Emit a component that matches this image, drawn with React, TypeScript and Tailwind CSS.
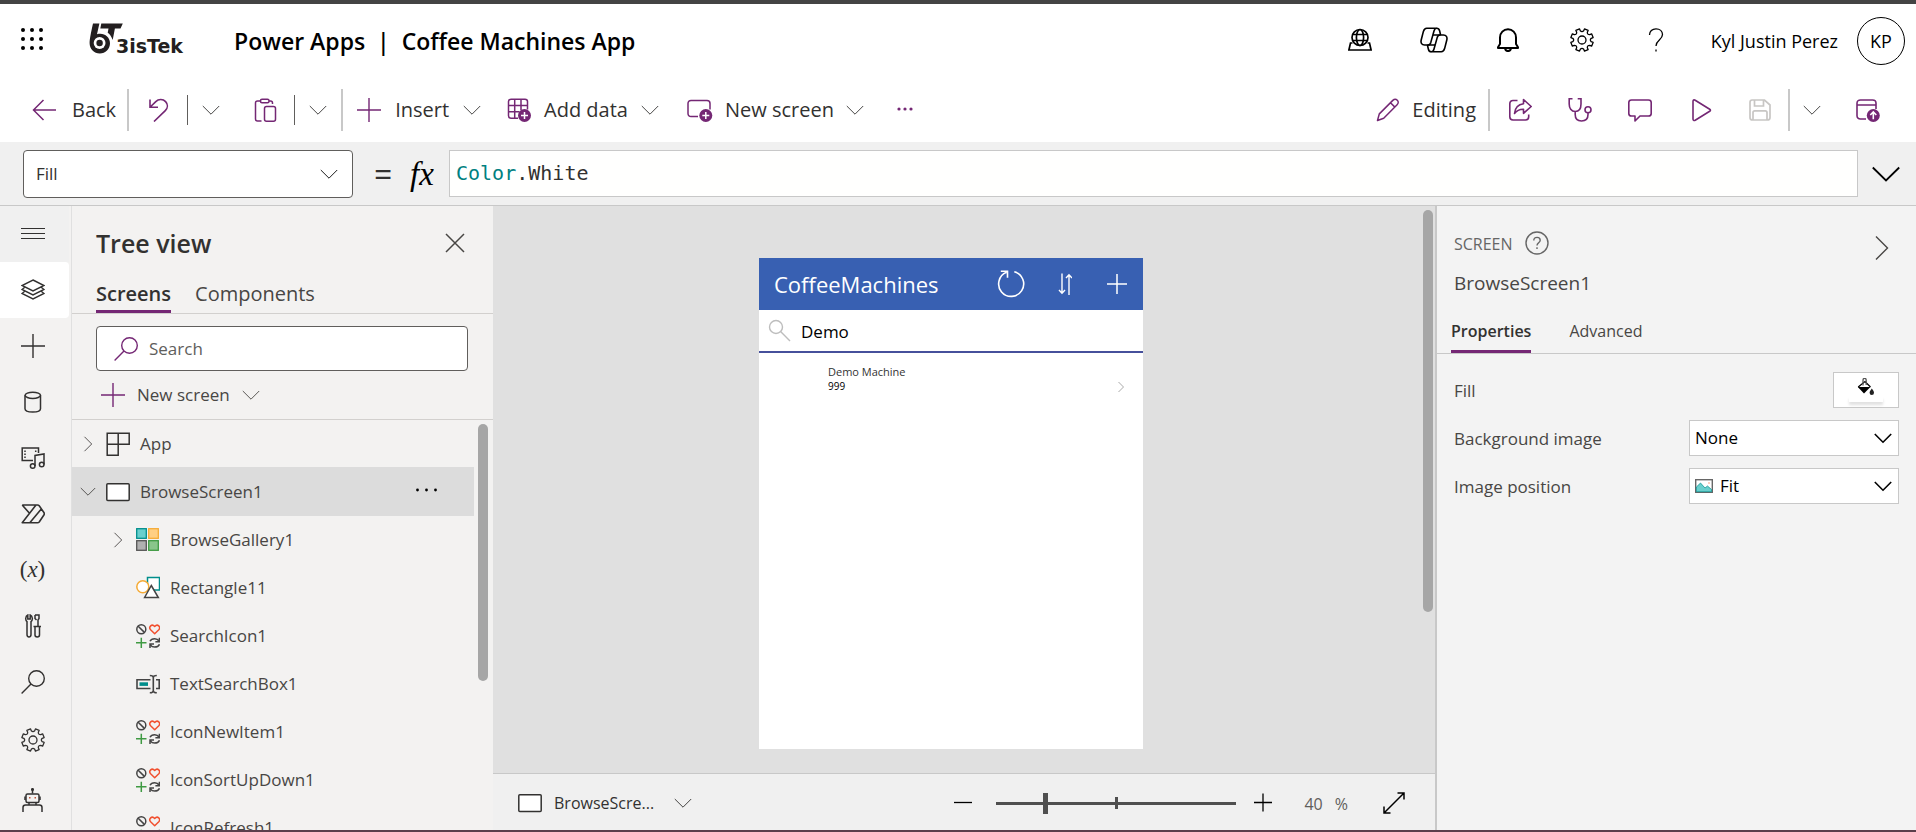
import React, { useState } from "react";

type IconProps = { className?: string };

function Svg({
  w = 24,
  h = 24,
  sw = 1.3,
  className,
  children,
}: {
  w?: number;
  h?: number;
  sw?: number;
  className?: string;
  children: React.ReactNode;
}) {
  return (
    <svg
      width={w}
      height={h}
      viewBox={`0 0 ${w} ${h}`}
      fill="none"
      stroke="currentColor"
      strokeWidth={sw}
      className={`shrink-0 ${className ?? ""}`}
      aria-hidden="true"
    >
      {children}
    </svg>
  );
}

const Chevron = ({ className }: IconProps) => (
  <Svg w={18} h={18} sw={0.9} className={className}>
    <path d="M.8 5 9 13.2 17.2 5" />
  </Svg>
);
const ChevronRight = ({ className }: IconProps) => (
  <Svg w={10} h={16} sw={0.9} className={className}>
    <path d="M1.500.8 8.700 8l-7.200 7.200" />
  </Svg>
);
const SelectChevron = ({ className }: IconProps) => (
  <Svg w={18} h={18} sw={1.6} className={className}>
    <path d="M.8 5 9 13.2 17.2 5" />
  </Svg>
);
const Plus = ({ className }: IconProps) => (
  <Svg sw={1.4} className={className}>
    <path d="M12 0v24M0 12h24" />
  </Svg>
);
const Magnifier = ({ className }: IconProps) => (
  <Svg className={className} sw={1.4}>
    <circle cx="15.500" cy="8.500" r="7.800" />
    <path d="M10 14 .6 23.400" />
  </Svg>
);

function gearPath() {
  const at = (r: number, deg: number) => {
    const a = ((deg - 90) * Math.PI) / 180;
    return `${(12 + r * Math.cos(a)).toFixed(2)} ${(12 + r * Math.sin(a)).toFixed(2)}`;
  };
  let d = "";
  for (let i = 0; i < 8; i++) {
    const a = i * 45 + 22.5;
    d += `${i ? "L" : "M"}${at(11.4, a - 10)}L${at(11.4, a + 10)}L${at(9.4, a + 12)}Q${at(7.4, a + 22.5)} ${at(9.4, a + 33)}`;
  }
  return d + "Z";
}
const gear = gearPath();

const Gear = () => (
  <Svg sw={1.3}>
    <path d={gear} strokeLinejoin="round" />
    <circle cx="12" cy="12" r="4" />
  </Svg>
);

const Logo = () => (
  <div className="flex items-end" aria-label="BisTek">
    <svg width="35" height="32" viewBox="0 0 35 32" aria-hidden="true" className="-mr-2 shrink-0">
      <path
        d="M4 .5h6.400L8 11.200C14.500 9.200 21 13.500 21 20.300c0 5.700-4.500 10.200-10.200 10.200S.6 26 .6 20.300c0-4 1.300-10.500 3.400-19.800Z"
        fill="#231f20"
      />
      <circle cx="10.600" cy="20" r="5.900" fill="#fff" />
      <circle cx="10.600" cy="20" r="3.200" fill="#231f20" />
      <path
        d="M12.300.5h21.500l-2.300 5h-5.600l-2.200 11.500c-1.200-3.400-2.700-5.700-5-7.300l.8-4.200h-8.200Z"
        fill="#231f20"
      />
    </svg>
    <span className="font-['DejaVu_Sans'] text-[19px] leading-[18px] font-bold text-[#231f20]">3isTek</span>
  </div>
);

const Waffle = () => (
  <svg width="24" height="24" viewBox="0 0 24 24" fill="#000" aria-hidden="true">
    {[3, 12, 21].map((y) => [3, 12, 21].map((x) => <circle key={`${x}-${y}`} cx={x} cy={y} r="2" />))}
  </svg>
);

const EnvIcon = () => (
  <Svg sw={1.7}>
    <circle cx="12" cy="9.500" r="8" />
    <ellipse cx="12" cy="9.500" rx="3.600" ry="8" />
    <path d="M4.800 6.500h14.400M4.800 12.500h14.400M4.500 15H2.500L.9 22h22.200l-1.600-7h-2" />
  </Svg>
);
const Copilot = () => (
  <Svg w={28} h={26} sw={1.6}>
    <g strokeLinejoin="round">
      <path d="M9.500 1.200H6.700C4.800 1.200 4 2.400 3.400 4.400L1.200 13c-.7 3 .6 5 3.300 5H8c1.500 0 2.300-1 2.800-2.600L14 4c.5-1.800 1.200-2.800 2.600-2.800Z" />
      <path d="M18.500 24.800h2.800c1.900 0 2.700-1.200 3.300-3.200l2.200-8.600c.7-3-.6-5-3.300-5H20c-1.500 0-2.300 1-2.800 2.600L14 22c-.5 1.800-1.200 2.800-2.600 2.800Z" />
      <path d="M16.600 1.200c1.900 0 2.600.9 3 2.600l1 4.200M11.400 24.800c-1.900 0-2.600-.9-3-2.600L7.400 18" />
      <path d="M13 8h7.500M7.500 18h7.600" />
    </g>
  </Svg>
);
const Bell = () => (
  <Svg sw={2}>
    <path d="M4 16V9.500C4 4.800 7.500 1.300 12 1.300s8 3.500 8 8.200V16l2 3.200v.8H2v-.8Z" strokeLinejoin="round" />
    <path d="M9 20.500c.3 1.600 1.400 2.600 3 2.600s2.700-1 3-2.600" />
  </Svg>
);
const Question = () => (
  <Svg sw={1.3}>
    <path d="M5.500 7C5.500 3.300 8.200.8 12 .8s6.500 2.300 6.500 5.800c0 5.400-6.500 5.600-6.500 11.400M12 21.500v2" />
  </Svg>
);

const BackArrow = () => (
  <Svg sw={1.5}>
    <path d="M1.500 12H24M11.500 2 1.500 12l10 10" />
  </Svg>
);
const Undo = () => (
  <Svg sw={1.6}>
    <path d="M4 1.500V9.300h8M4.500 8.800l5.300-5.200C12.400 1 17 .8 19.600 3.600c2.500 2.700 2.200 6.500-.3 9L8 23.500" />
  </Svg>
);
const Clipboard = () => (
  <Svg sw={1.5}>
    <path d="M7.500 3H4.500C3.200 3 2.500 3.700 2.500 5v16c0 1.300.7 2 2 2h4M16 3h1.500c1.300 0 2 .7 2 2v1" />
    <rect x="7.500" y="1.200" width="8.500" height="3.600" rx="1.500" />
    <rect x="11.500" y="8.500" width="11" height="14.700" rx="2" />
  </Svg>
);
const AddData = () => (
  <Svg sw={1.5}>
    <path d="M11 20.300H4c-1.600 0-2.500-1-2.500-2.500V3.500C1.500 2 2.400 1.200 4 1.200h14c1.500 0 2.500.8 2.500 2.300v8M1.500 7.500h19M1.500 13.700h11M7.700 1.200v19M14 1.200v11" />
    <circle cx="17.500" cy="17.500" r="6.500" fill="currentColor" stroke="none" />
    <path d="M17.500 14v7M14 17.500h7" stroke="#fff" />
  </Svg>
);
const AddScreen = () => (
  <Svg w={26} sw={1.5}>
    <path d="M11 18.500H4C2.200 18.500 1 17.300 1 15.500v-10C1 3.700 2.200 2.500 4 2.500h16c1.800 0 3 1.200 3 3v6" />
    <circle cx="18.800" cy="17.500" r="6.500" fill="currentColor" stroke="none" />
    <path d="M18.800 14v7M15.300 17.500h7" stroke="#fff" />
  </Svg>
);
const Pencil = () => (
  <Svg sw={1.5}>
    <path
      d="m1.500 22.500 1.800-6.600L16.800 2.400c1.500-1.500 3.300-1.400 4.500-.2s1.300 3-.2 4.500L7.700 20.300ZM14.500 4.700l4.400 4.400"
      strokeLinejoin="round"
    />
  </Svg>
);
const Share = () => (
  <Svg sw={1.6}>
    <path d="M9.500 2.500H5c-2 0-3.200 1.200-3.200 3.200v13.100C1.800 20.800 3 22 5 22h12.500c2 0 3.200-1.200 3.200-3.200V16.500" />
    <path
      d="M15.500 1.500 23.200 8.500l-7.700 6.800v-4.100c-4-.1-6.700 1.200-9 4.300.5-5.200 3.500-9.200 9-9.800Z"
      strokeLinejoin="round"
    />
  </Svg>
);
const Checker = () => (
  <Svg sw={1.6}>
    <path d="M4.500.8H1.200V6c0 4 2 7.500 6 7.500S13 10 13 6V.8H9.700M7.200 13.500v3c0 4 2.300 6.500 6.300 6.500s6.500-2.500 6.500-6.500V15" />
    <circle cx="20" cy="11.700" r="3" />
  </Svg>
);
const Comment = () => (
  <Svg sw={1.6}>
    <path
      d="M3.500 2h17c1.600 0 2.700 1 2.700 2.600v10.800c0 1.600-1.100 2.600-2.700 2.600H12l-5 5V18H3.500C1.900 18 .8 17 .8 15.400V4.600C.8 3 1.900 2 3.500 2Z"
      strokeLinejoin="round"
    />
  </Svg>
);
const Play = () => (
  <Svg sw={1.6}>
    <path
      d="M5 3.500c0-1.500 1-2 2.200-1.300l14.500 9c1 .6 1 1.400 0 2l-14.500 9C6 22.900 5 22.400 5 21Z"
      strokeLinejoin="round"
    />
  </Svg>
);
const Save = () => (
  <Svg sw={1.7}>
    <path d="M4 2h12.500L22 7v12.500c0 1.600-.8 2.500-2.500 2.500h-15C2.800 22 2 21.100 2 19.500v-15C2 2.900 2.800 2 4 2ZM6.500 2v6h9V2M5 22v-7.500c0-1 .6-1.700 1.700-1.700h10.600c1.100 0 1.700.7 1.700 1.700V22" />
  </Svg>
);
const Publish = () => (
  <Svg sw={1.6}>
    <path d="M10 21H4.500C2.500 21 1 19.800 1 17.800V5.200C1 3.200 2.500 2 4.500 2h12c2 0 3.500 1.200 3.500 3.200V11M1 7h19" />
    <circle cx="17.300" cy="17.500" r="6.500" fill="currentColor" stroke="none" />
    <path d="M17.300 21.300v-7M14.300 17l3-3 3 3" stroke="#fff" />
  </Svg>
);

const Hamburger = () => (
  <Svg sw={1}>
    <path d="M0 6.500h24M0 11.500h24M0 16.500h24" />
  </Svg>
);
const Layers = () => (
  <Svg sw={1.4}>
    <path d="m12 2 11 5.500L12 13 1 7.500ZM3.500 9.500 1 11.500 12 17l11-5.500-2.500-2M3.500 13.500 1 15.500 12 21l11-5.500-2.500-2" />
  </Svg>
);
const Database = () => (
  <Svg sw={1.5}>
    <path d="M4 5.300v13.400c0 1.900 3.400 3.300 7.800 3.300s7.700-1.400 7.700-3.300V5.300" />
    <ellipse cx="11.800" cy="5.300" rx="7.700" ry="3.100" />
  </Svg>
);
const Media = () => (
  <Svg sw={1.5}>
    <path d="M12 14.500H1.200V2H17.500v5M14 20V9.500L23 8v10.500" />
    <circle cx="11.700" cy="20" r="2.300" />
    <circle cx="20.700" cy="18.500" r="2.300" />
    <path d="M4 4.500v8M14.700 4.500v3" strokeDasharray="1.500 1.500" />
  </Svg>
);
const Flow = () => (
  <Svg sw={1.6}>
    <path
      d="M1.200 3H16.500c.8 0 1.200.2 1.700.8l4.700 6.700c.6.900.6 1.600 0 2.500L18.200 20c-.5.600-.9.800-1.700.8H1.200L15 3M1.200 3l7.300 8.300M8.800 20.800 20.300 6.900"
      strokeLinejoin="round"
    />
  </Svg>
);
const Tools = () => (
  <Svg sw={1.5}>
    <path d="M6.800 1C4.200 2 4.200 6.500 6 7.600V20.500c0 3.200 4 3.200 4 0V7.600c2-1.200 1.800-5.600-.8-6.600v4H6.800ZM14 1h4v3.500L17 6v6.500h2M14 1v3.500L15.500 6M12.500 12.500H20M14 13v8c0 2.500 4.500 2.500 4.500 0v-8" />
  </Svg>
);
const Bot = () => (
  <Svg sw={1.5}>
    <path d="M2 24v-4.500C2 18 3 17 4.500 17h14c1.500 0 2.500 1 2.500 2.500V24M11.500 1v4.500M8 14.500v2M15 14.500v2M4 8.500v3.500M19 8.500v3.500" />
    <rect x="5" y="6" width="13" height="8.500" rx="1.500" />
    <circle cx="11.500" cy="1.500" r=".8" />
    <path d="M8 9.800h1.500M13.500 9.800H15" stroke="#c0563b" />
  </Svg>
);

const AppIcon = () => (
  <Svg sw={1.5}>
    <path d="M1.200 1.200h22v11h-22ZM1.200 12.200v11h11v-22" />
  </Svg>
);
const ScreenIcon = () => (
  <Svg sw={1.5} className="text-[#323130]">
    <rect x=".8" y="3.800" width="22.400" height="16.800" rx="1" fill="#fff" />
  </Svg>
);
const GalleryIcon = () => (
  <Svg sw={1.3}>
    <rect x=".7" y=".7" width="9.600" height="9.600" fill="#69cfcd" stroke="#008e8c" />
    <rect x="12.700" y=".7" width="9.600" height="9.600" fill="#ffcf84" stroke="#f5ab36" />
    <rect x=".7" y="12.700" width="9.600" height="9.600" fill="#b0b0b0" stroke="#555" />
    <rect x="12.700" y="12.700" width="9.600" height="9.600" fill="#8ac58b" stroke="#3f9a43" />
  </Svg>
);
const ShapesIcon = () => (
  <Svg sw={1.5}>
    <rect x="11.500" y="1.500" width="12" height="12.500" fill="#fff" stroke="#008e8c" />
    <circle cx="6.800" cy="10.800" r="6" fill="#fff" stroke="#f5ab36" />
    <path d="m15.300 9.500 7 12H8.600Z" fill="#fff" stroke="#444" />
  </Svg>
);
const IconSet = () => (
  <Svg sw={1.5}>
    <circle cx="5.300" cy="5.300" r="4.500" stroke="#444" />
    <path d="m2.200 2.200 6.200 6.200" stroke="#444" />
    <path
      d="M18.700 9.800 14.600 5.700c-2.400-2.700 1.200-6.400 4.100-3.200 2.900-3.200 6.500.5 4.100 3.200Z"
      stroke="#f1502f"
      strokeLinejoin="round"
    />
    <path d="M5.300 13.700v10.300M0 18.800h10.500" stroke="#3f9a43" />
    <path
      d="M14 17.300c.8-1.800 2.500-2.600 4.700-2.600 2 0 3.500 1 4.300 2.300M23.400 13.800v3.900h-4M23.500 20.300c-.8 1.800-2.500 2.800-4.800 2.800-2 0-3.500-1-4.300-2.300M14 24v-3.900h4"
      stroke="#444"
    />
  </Svg>
);
const TextBoxIcon = () => (
  <Svg sw={1.6}>
    <path d="M14.500 7.800H1v8.700h13.500M20 7.800h3.200v8.700H20" stroke="#444" />
    <path d="M3.500 12.100h8.500" stroke="#008e8c" strokeWidth="3.600" />
    <path
      d="M13.800 3.500c2 0 3.500.5 3.500 2v13.200c0 1.500-1.500 2-3.500 2M20.800 3.500c-2 0-3.500.5-3.500 2M20.800 20.700c-2 0-3.500-.5-3.500-2"
      stroke="#444"
    />
  </Svg>
);

const railItems: { label: string; icon: React.ReactNode; box: string }[] = [
  { label: "Menu", icon: <Hamburger />, box: "h-14 bg-[#f0f0f0]" },
  { label: "Tree view", icon: <Layers />, box: "h-14 bg-white rounded-r-sm" },
  { label: "Insert", icon: <Plus />, box: "h-14" },
  { label: "Data", icon: <Database />, box: "h-14" },
  { label: "Media", icon: <Media />, box: "h-14" },
  { label: "Power Automate", icon: <Flow />, box: "h-14" },
  {
    label: "Variables",
    icon: (
      <span className="font-['Liberation_Serif'] text-[23px] leading-6 text-[#323130]">
        (<i>x</i>)
      </span>
    ),
    box: "h-14",
  },
  { label: "Advanced tools", icon: <Tools />, box: "h-14" },
  { label: "Search", icon: <Magnifier />, box: "h-14" },
  { label: "Settings", icon: <Gear />, box: "h-[60px]" },
  { label: "Virtual agent", icon: <Bot />, box: "h-[60px]" },
];

const childRows: { name: string; icon: React.ReactNode; expandable?: boolean }[] = [
  { name: "BrowseGallery1", icon: <GalleryIcon />, expandable: true },
  { name: "Rectangle11", icon: <ShapesIcon /> },
  { name: "SearchIcon1", icon: <IconSet /> },
  { name: "TextSearchBox1", icon: <TextBoxIcon /> },
  { name: "IconNewItem1", icon: <IconSet /> },
  { name: "IconSortUpDown1", icon: <IconSet /> },
  { name: "IconRefresh1", icon: <IconSet /> },
];

const Divider = () => <span className="h-[42px] w-0.5 shrink-0 bg-[#c8c8c8]" />;
const ThinDivider = () => <span className="h-[30px] w-px shrink-0 bg-[#605e5c]" />;

function Header() {
  const actions = [
    { label: "Environment", icon: <EnvIcon /> },
    { label: "Copilot", icon: <Copilot /> },
    { label: "Notifications", icon: <Bell /> },
    { label: "Settings", icon: <Gear /> },
    { label: "Help", icon: <Question /> },
  ];
  return (
    <header className="flex h-[74px] shrink-0 items-center bg-white pr-[11px] pl-5 text-black">
      <button aria-label="App launcher" className="pb-1">
        <Waffle />
      </button>
      <div className="ml-[45px] pb-1">
        <Logo />
      </div>
      <h1 className="ml-[51px] text-[23px] font-semibold whitespace-pre">Power Apps  |  Coffee Machines App</h1>
      <div className="ml-auto flex items-center">
        {actions.map((a) => (
          <button key={a.label} aria-label={a.label} className="flex w-[74px] justify-center pb-0.5">
            {a.icon}
          </button>
        ))}
        <span className="ml-[18px] text-[18px] whitespace-nowrap">Kyl Justin Perez</span>
        <button className="ml-[19px] size-12 rounded-full border border-black text-[18px]">KP</button>
      </div>
    </header>
  );
}

function Toolbar() {
  return (
    <div className="flex h-16 shrink-0 items-center bg-white pr-9 pl-8 text-[20px] whitespace-nowrap text-[#323130]">
      <button className="mr-[11px] flex items-center gap-4">
        <span className="text-[#742774]">
          <BackArrow />
        </span>
        Back
      </button>
      <Divider />
      <button aria-label="Undo" className="mx-[17px] text-[#742774]">
        <Undo />
      </button>
      <ThinDivider />
      <button aria-label="Undo options" className="mr-[33px] ml-[14px]">
        <Chevron />
      </button>
      <button aria-label="Paste" className="mr-[17px] text-[#742774]">
        <Clipboard />
      </button>
      <ThinDivider />
      <button aria-label="Paste options" className="mx-[14px]">
        <Chevron />
      </button>
      <Divider />
      <button className="ml-[14px] flex items-center gap-[14px]">
        <span className="text-[#742774]">
          <Plus />
        </span>
        Insert
        <Chevron />
      </button>
      <button className="ml-[26px] flex items-center gap-[13px]">
        <span className="text-[#742774]">
          <AddData />
        </span>
        Add data
        <Chevron />
      </button>
      <button className="ml-7 flex items-center gap-3">
        <span className="text-[#742774]">
          <AddScreen />
        </span>
        New screen
        <Chevron />
      </button>
      <button aria-label="More commands" className="ml-8 text-[#742774]">
        <svg width="18" height="18" viewBox="0 0 18 18" fill="currentColor" aria-hidden="true">
          <circle cx="3" cy="8" r="1.600" />
          <circle cx="9" cy="8" r="1.600" />
          <circle cx="15" cy="8" r="1.600" />
        </svg>
      </button>

      <button className="ml-auto flex items-center gap-3">
        <span className="text-[#742774]">
          <Pencil />
        </span>
        Editing
      </button>
      <span className="mr-[18px] ml-3 flex">
        <Divider />
      </span>
      <div className="flex gap-9 text-[#742774]">
        <button aria-label="Share">
          <Share />
        </button>
        <button aria-label="App checker">
          <Checker />
        </button>
        <button aria-label="Comments">
          <Comment />
        </button>
        <button aria-label="Preview">
          <Play />
        </button>
        <button aria-label="Save" className="mr-4 text-[#c8c6c4]">
          <Save />
        </button>
      </div>
      <Divider />
      <button aria-label="Save options" className="mr-[35px] ml-[13px]">
        <Chevron />
      </button>
      <button aria-label="Publish" className="text-[#742774]">
        <Publish />
      </button>
    </div>
  );
}

function FormulaBar() {
  return (
    <div className="flex h-16 shrink-0 items-center border-b border-[#c8c8c8] bg-[#f0f0f0] pr-4 pl-[23px]">
      <div className="relative w-[330px] shrink-0">
        <select
          aria-label="Property"
          className="h-12 w-full appearance-none rounded-sm border border-[#605e5c] bg-white px-3 text-[17px] text-[#323130]"
        >
          <option>Fill</option>
        </select>
        <Chevron className="pointer-events-none absolute top-[15px] right-[15px]" />
      </div>
      <span className="ml-[21px] w-[18px] text-center text-[32px] leading-8 text-[#323130]">=</span>
      <span className="mr-3 ml-[18px] w-[27px] font-['Liberation_Serif'] text-[33px] leading-10 text-black italic">fx</span>
      <div
        role="textbox"
        aria-label="Formula"
        contentEditable
        suppressContentEditableWarning
        className="h-[47px] min-w-0 flex-1 border border-[#c8c8c8] bg-[#fffffe] px-1.5 pt-2 font-['DejaVu_Sans_Mono'] text-[20px] leading-7 text-[#323130]"
      >
        <span className="text-[#008080]">Color</span>.White
      </div>
      <button aria-label="Expand formula bar" className="ml-[14px] text-black">
        <Svg w={28} h={28} sw={1.8}>
          <path d="m.8 7.500 13.200 13 13.200-13" />
        </Svg>
      </button>
    </div>
  );
}

function Rail() {
  return (
    <nav className="flex w-[72px] shrink-0 flex-col border-r border-[#e0e0e0] text-[#323130]">
      {railItems.map((r) => (
        <button
          key={r.label}
          aria-label={r.label}
          className={`flex w-[69px] shrink-0 items-center justify-center pr-1 ${r.box}`}
        >
          {r.icon}
        </button>
      ))}
    </nav>
  );
}

function TreeView() {
  const [tab, setTab] = useState("Screens");
  return (
    <aside className="flex w-[421px] shrink-0 flex-col text-[17px] text-[#484644]">
      <div className="flex items-center justify-between pt-[18px] pr-[27px] pl-6">
        <h2 className="text-[25px] leading-[38px] font-semibold text-[#323130]">Tree view</h2>
        <button aria-label="Close" className="text-[#484644]">
          <Svg w={22} h={22} sw={1.5}>
            <path d="m2 2 18 18M20 2 2 20" />
          </Svg>
        </button>
      </div>
      <div className="mt-[11px] flex gap-6 border-b border-[#d2d0ce] pl-6 text-[20px]">
        {["Screens", "Components"].map((t) => (
          <button
            key={t}
            onClick={() => setTab(t)}
            className={
              tab === t
                ? "h-10 border-b-3 border-[#742774] pt-1 font-semibold text-[#323130]"
                : "h-10 border-b-3 border-transparent pt-1"
            }
          >
            {t}
          </button>
        ))}
      </div>
      <label className="mt-3 mr-[25px] ml-6 flex h-[45px] items-center gap-[11px] rounded-sm border border-[#605e5c] bg-white px-[17px]">
        <span className="text-[#742774]">
          <Magnifier />
        </span>
        <input
          aria-label="Search"
          placeholder="Search"
          className="min-w-0 flex-1 bg-transparent outline-none placeholder:text-[#605e5c]"
        />
      </label>
      <div className="flex h-[49px] items-center border-b border-[#d2d0ce] pl-[29px]">
        <button className="flex items-center gap-3">
          <span className="text-[#742774]">
            <Plus />
          </span>
          New screen
          <Chevron />
        </button>
      </div>
      <div className="flex min-h-0 flex-1">
        <ul className="min-w-0 flex-1 overflow-hidden">
          <li className="flex h-[47px] items-center pl-[11px]">
            <span className="flex w-[23px]">
              <ChevronRight />
            </span>
            <span className="text-[#323130]">
              <AppIcon />
            </span>
            <span className="ml-[10px]">App</span>
          </li>
          <li className="flex h-[49px] items-center bg-[#dcdcdc] pr-[35px] pl-2">
            <span className="flex w-[26px]">
              <Svg w={16} h={16} sw={0.9}>
                <path d="M.8 4 8 11.200 15.200 4" />
              </Svg>
            </span>
            <ScreenIcon />
            <span className="ml-[10px]">BrowseScreen1</span>
            <button aria-label="More actions" className="ml-auto text-black">
              <svg width="24" height="12" viewBox="0 0 24 12" fill="currentColor" aria-hidden="true">
                <circle cx="2.500" cy="4" r="1.400" />
                <circle cx="11.500" cy="4" r="1.400" />
                <circle cx="20.500" cy="4" r="1.400" />
              </svg>
            </button>
          </li>
          {childRows.map((c) => (
            <li key={c.name} className="flex h-12 items-center pl-[41px]">
              <span className="flex w-[23px]">{c.expandable && <ChevronRight />}</span>
              {c.icon}
              <span className="ml-[10px]">{c.name}</span>
            </li>
          ))}
        </ul>
        <div className="w-[19px] shrink-0 pt-1 pl-1">
          <div className="h-[257px] w-[10px] rounded-full bg-[#a6a6a6]" />
        </div>
      </div>
    </aside>
  );
}

function PhonePreview() {
  return (
    <div className="flex h-[491px] w-[384px] flex-col bg-white font-['Open_Sans']">
      <div className="flex h-[52px] shrink-0 items-center bg-[#3860b2] px-[15px] text-white">
        <span className="flex-1 text-[22px]">CoffeeMachines</span>
        <button aria-label="Refresh">
          <Svg w={28} h={28} sw={1.6}>
            <path d="M17.300 1.800A12.500 12.500 0 1 1 9.500 2.300M3.800 1.200h6.700v6.500" />
          </Svg>
        </button>
        <button aria-label="Sort" className="ml-[33px]">
          <Svg w={14} sw={1.4}>
            <path d="M4 1.500v20M1 18l3 3.200L7 18M11 23V2.500M8 6l3-3.200L14 6" />
          </Svg>
        </button>
        <button aria-label="New item" className="ml-[34px]">
          <Svg w={22} h={22} sw={1.5}>
            <path d="M11 1v20M1 11h20" />
          </Svg>
        </button>
      </div>
      <label className="flex h-[43px] shrink-0 items-center border-b-2 border-[#46509b] pl-[9px]">
        <Svg w={24} h={24} sw={1.4} className="text-[#bdbdbd]">
          <circle cx="8" cy="8" r="6.500" />
          <path d="m12.600 12.600 9.400 9.400" />
        </Svg>
        <input
          aria-label="Search items"
          defaultValue="Demo"
          className="ml-[9px] min-w-0 flex-1 pt-0.5 text-[17px] text-black outline-none"
        />
      </label>
      <div className="flex items-center pt-3 pr-[18px] pl-[69px]">
        <div className="flex-1 text-[11px] leading-[14px]">
          <p className="text-[#333]">Demo Machine</p>
          <p className="text-[10px] text-black">999</p>
        </div>
        <Svg w={8} h={12} sw={1} className="mt-4 text-[#aaa]">
          <path d="m1.500 1 5 5-5 5" />
        </Svg>
      </div>
    </div>
  );
}

function Workspace() {
  return (
    <main className="flex min-w-0 flex-1 flex-col bg-[#e0e0e0]">
      <div className="flex min-h-0 flex-1">
        <div className="flex flex-1 justify-center pt-[52px] pr-[14px]">
          <PhonePreview />
        </div>
        <div className="w-3 shrink-0 pt-1">
          <div className="h-[402px] w-[10px] rounded-full bg-[#a6a6a6]" />
        </div>
      </div>
      <div className="flex h-[57px] shrink-0 items-center border-t border-[#c8c8c8] bg-[#f0f0f0] pt-0.5 pr-[29px] pl-[25px] text-[16px] text-[#323130]">
        <button className="flex items-center">
          <ScreenIcon />
          <span className="ml-3">BrowseScre...</span>
          <Chevron className="ml-5" />
        </button>
        <button aria-label="Zoom out" className="mr-[23px] ml-auto text-black">
          <Svg w={20} h={20} sw={1.3}>
            <path d="M1 9.500h18" />
          </Svg>
        </button>
        <div className="relative flex items-center">
          <span className="absolute left-[119px] h-3 w-[3px] bg-[#4f4f4f]" />
          <input
            type="range"
            aria-label="Zoom"
            min={10}
            max={160}
            defaultValue={40}
            className="relative h-5 w-60 appearance-none bg-transparent [&::-webkit-slider-runnable-track]:h-[3px] [&::-webkit-slider-runnable-track]:bg-[#4f4f4f] [&::-webkit-slider-thumb]:-mt-[9px] [&::-webkit-slider-thumb]:h-[21px] [&::-webkit-slider-thumb]:w-[5px] [&::-webkit-slider-thumb]:appearance-none [&::-webkit-slider-thumb]:bg-[#4f4f4f]"
          />
        </div>
        <button aria-label="Zoom in" className="ml-[17px] text-black">
          <Svg w={20} h={20} sw={1.3}>
            <path d="M1 9.500h18M10 .5v18" />
          </Svg>
        </button>
        <span className="ml-[31px] pt-0.5 text-[#605e5c]">40</span>
        <span className="ml-3 pt-0.5 text-[#605e5c]">%</span>
        <button aria-label="Fit to window" className="ml-[34px] text-black">
          <Svg w={24} h={24} sw={1.5}>
            <path d="M2 22 22 2M15.500 2H22v6.500M2 15.500V22h6.500" />
          </Svg>
        </button>
      </div>
    </main>
  );
}

function PropertiesPanel() {
  const [tab, setTab] = useState("Properties");
  return (
    <aside className="w-[481px] shrink-0 border-l-2 border-[#c8c8c8] bg-[#f3f3f3] text-[17px] text-[#484644]">
      <div className="flex pt-5 pr-[27px] pl-[17px]">
        <div className="flex-1">
          <div className="flex items-center gap-3 text-[16px] leading-8 text-[#666]">
            <span className="pt-0.5">SCREEN</span>
            <button aria-label="Help for screen">
              <Svg sw={1.4}>
                <circle cx="12" cy="12" r="11" />
                <path d="M8.800 9.500c0-2 1.300-3.100 3.300-3.100 1.900 0 3.100 1.100 3.100 2.800 0 2.500-3.200 2.600-3.200 5.300M12 16.300v1.800" />
              </Svg>
            </button>
          </div>
          <div className="mt-1.5 text-[19px] leading-[34px]">BrowseScreen1</div>
        </div>
        <button aria-label="Collapse panel" className="mt-[10px] self-start">
          <Svg w={14} sw={1.4}>
            <path d="M1 .5 12.500 12 1 23.500" />
          </Svg>
        </button>
      </div>
      <div className="mt-[17px] flex gap-[38px] border-b border-[#c8c8c8] pl-[14px] text-[16px]">
        {["Properties", "Advanced"].map((t) => (
          <button
            key={t}
            onClick={() => setTab(t)}
            className={
              tab === t
                ? "h-9 border-b-3 border-[#742774] pb-1.5 font-semibold text-[#323130]"
                : "h-9 border-b-3 border-transparent pb-1.5"
            }
          >
            {t}
          </button>
        ))}
      </div>
      <div className="grid grid-cols-[1fr_auto] items-center gap-y-3 pt-[18px] pr-[17px] pl-[17px]">
        <span className="pt-0.5">Fill</span>
        <button
          aria-label="Fill color"
          className="flex h-9 w-[66px] flex-col items-center justify-self-end border border-[#c8c8c8] bg-white pt-[5px]"
        >
          <svg width="18" height="18" viewBox="0 0 18 18" aria-hidden="true">
            <path d="M1.200 9 8 3.500 13.500 9" fill="none" stroke="#000" strokeWidth="1.300" />
            <path d="M.8 9h12.600L7 15.500Z" fill="#000" />
            <path d="M6 7.500V2.300C6-.3 9.200-.3 9.200 2.300V7" fill="none" stroke="#555" strokeWidth="1.300" />
            <path d="M14.800 10.500c1.300 1.800 2.200 3 2.200 4.200a2.200 2.200 0 0 1-4.400 0c0-1.200 1-2.400 2.200-4.200Z" fill="#222" />
          </svg>
          <span className="h-1.5 w-[34px] bg-white shadow-[0_3px_3px_rgba(0,0,0,0.12)]" />
        </button>
        <label htmlFor="bg-image" className="pt-0.5">
          Background image
        </label>
        <div className="relative">
          <select
            id="bg-image"
            className="block h-9 w-[210px] appearance-none border border-[#c8c8c8] bg-white pr-8 pl-[5px] text-black"
          >
            <option>None</option>
          </select>
          <SelectChevron className="pointer-events-none absolute top-[9px] right-[7px] text-black" />
        </div>
        <label htmlFor="img-position" className="pt-0.5">
          Image position
        </label>
        <div className="relative">
          <select
            id="img-position"
            className="block h-9 w-[210px] appearance-none border border-[#c8c8c8] bg-white pr-8 pl-[30px] text-black"
          >
            <option>Fit</option>
          </select>
          <svg
            width="18"
            height="14"
            viewBox="0 0 18 14"
            className="pointer-events-none absolute top-[11px] left-[6px]"
            aria-hidden="true"
          >
            <rect x=".7" y=".7" width="16.600" height="12.600" fill="#fff" stroke="#666" strokeWidth="1.400" />
            <path d="M1.400 8 5.500 4l4.500 5 2.500-2 4 3.500v2.200H1.400Z" fill="#69cfcd" stroke="#008e8c" strokeWidth=".7" />
            <circle cx="14" cy="4" r=".9" fill="#f8b9a2" />
          </svg>
          <SelectChevron className="pointer-events-none absolute top-[9px] right-[7px] text-black" />
        </div>
      </div>
    </aside>
  );
}

export default function App() {
  return (
    <div className="flex h-screen flex-col overflow-hidden border-t-4 border-b-2 border-t-[#444] border-b-[#5a3f4b] bg-[#f3f2f1] font-['Open_Sans',sans-serif]">
      <Header />
      <Toolbar />
      <FormulaBar />
      <div className="flex min-h-0 flex-1">
        <Rail />
        <TreeView />
        <Workspace />
        <PropertiesPanel />
      </div>
    </div>
  );
}
